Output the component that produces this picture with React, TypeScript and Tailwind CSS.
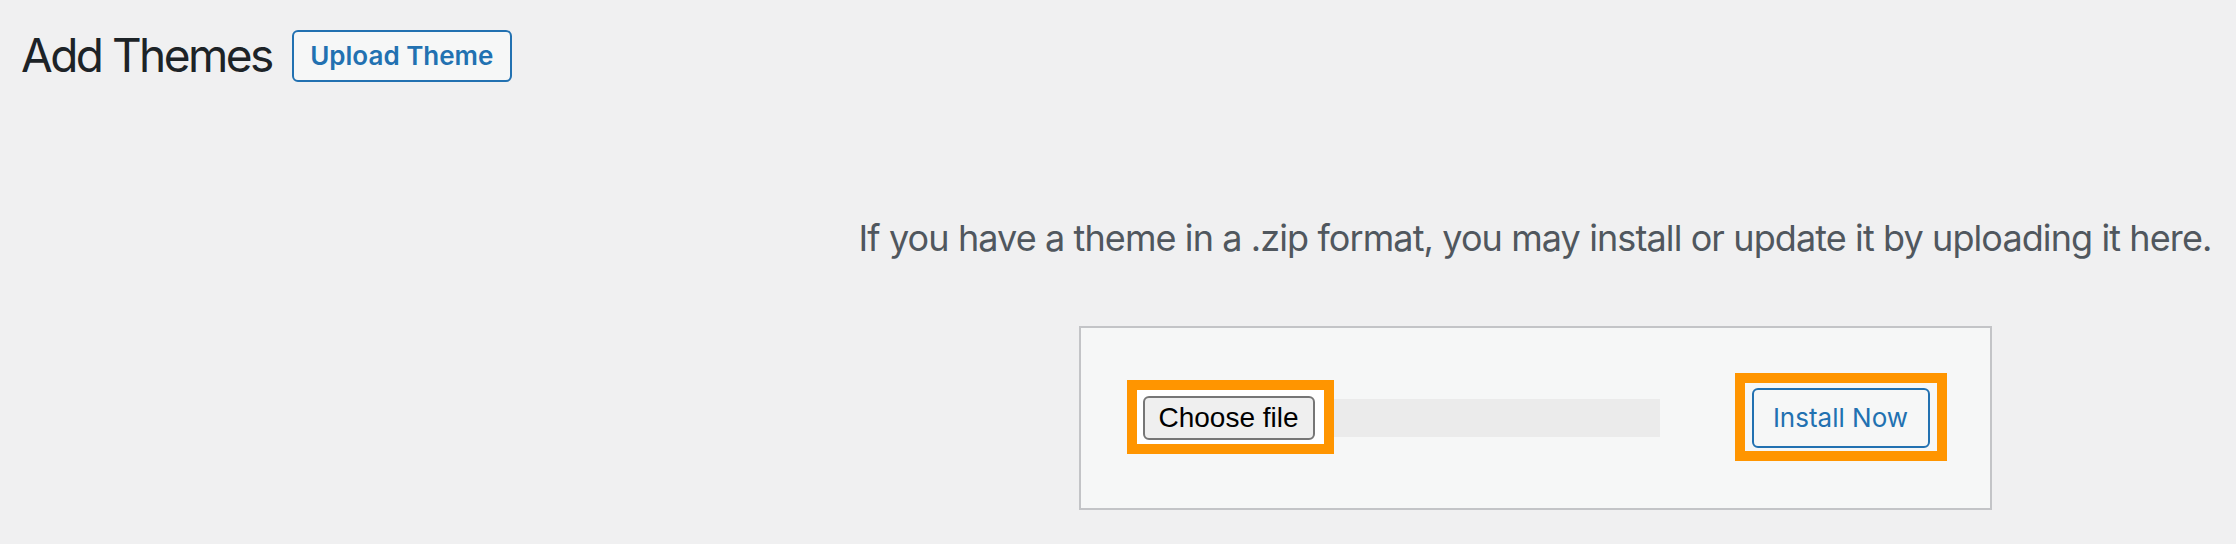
const inter = "font-['Inter','Liberation_Sans',sans-serif]";

const FileField = () => (
  <div className="relative ml-[2px] flex items-center">
    {/* orange highlight around the picker button */}
    <div className="absolute left-[-16px] top-[-16px] h-[74px] w-[207px] border-[10px] border-[#ff9500] bg-white" />
    <button
      type="button"
      className="relative z-10 h-[44px] w-[172px] rounded-[6px] border-2 border-[#767676] bg-[#efefef] font-['Liberation_Sans',Arial,sans-serif] text-[28px] leading-none text-black">
      Choose file
    </button>
    <div className="ml-[4px] h-[38px] w-[341px] bg-[#ebebeb]" />
  </div>
);

const InstallButton = () => (
  <div className="relative">
    <div className="absolute left-[-17px] top-[-15px] h-[88px] w-[212px] border-[10px] border-[#ff9500]" />
    <button
      type="button"
      className={`relative h-[60px] w-[178px] rounded-[6px] border-2 border-[#2271b1] bg-[#f6f7f7] ${inter} text-[26px] leading-none text-[#2271b1]`}>
      Install Now
    </button>
  </div>
);

export default function App() {
  return (
    <div className={`h-[544px] w-[2236px] overflow-hidden bg-[#f0f0f1] ${inter}`}>
      <div className="flex items-start">
        <h1 className="ml-[21px] mt-[25px] text-[46px] font-normal leading-[60px] tracking-[-0.055em] text-[#1d2327]">
          Add Themes
        </h1>
        <button
          type="button"
          className="ml-[20px] mt-[30px] h-[52px] w-[220px] rounded-[6px] border-2 border-[#2271b1] bg-[#f6f7f7] text-[26px] font-semibold leading-none text-[#2271b1]">
          Upload Theme
        </button>
      </div>

      <div className="flex">
        <div className="w-[834px] shrink-0" />
        <div className="flex flex-1 flex-col items-center">
          <p className="mt-[126px] whitespace-nowrap text-[36px] leading-[54px] tracking-[-0.025em] text-[#50575e]">
            If you have a theme in a .zip format, you may install or update it by uploading it here.
          </p>
          <form className="mt-[61px] flex w-[913px] items-center justify-between border-2 border-[#c3c4c7] bg-[#f6f7f7] p-[60px]">
            <FileField />
            <InstallButton />
          </form>
        </div>
      </div>
    </div>
  );
}
